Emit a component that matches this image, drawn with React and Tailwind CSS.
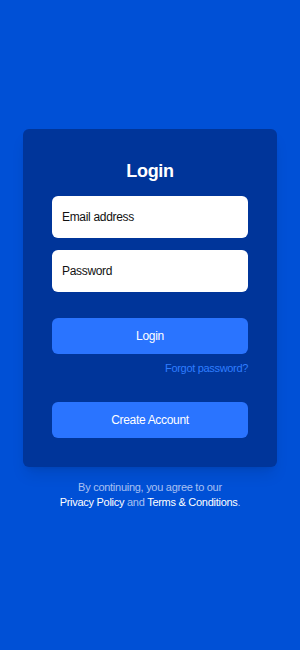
export default function App() {
  return (
    <div className="flex min-h-[650px] w-full flex-col items-center bg-[#0050d6] pt-[129px] font-['Liberation_Sans',Arial,sans-serif] tracking-[-0.02em]">
      <div className="w-[254px] rounded-md bg-[#00359a] px-[29px] pb-[29px] pt-[31px] shadow-lg">
        <h1 className="text-center text-[18px] font-bold leading-[22px] text-white">Login</h1>
        <div className="mt-[14px] flex h-[42px] items-center rounded-md bg-white px-[10px] text-[12px] text-[#111]">Email address</div>
        <div className="mt-[12px] flex h-[42px] items-center rounded-md bg-white px-[10px] text-[12px] text-[#111]">Password</div>
        <button type="button" className="mt-[26px] flex h-[36px] w-full items-center justify-center rounded-md bg-[#2a74ff] text-[12px] text-white">Login</button>
        <div className="mt-[6px] text-right text-[11px] text-[#2f7dff]">Forgot password?</div>
        <button type="button" className="mt-[25px] flex h-[36px] w-full items-center justify-center rounded-md bg-[#2a74ff] text-[12px] text-white">Create Account</button>
      </div>
      <p className="mt-[13px] text-center text-[11px] leading-[15px] tracking-tight text-[#a9c0f2]">
        By continuing, you agree to our
        <br />
        <span className="text-white">Privacy Policy</span> and <span className="text-white">Terms &amp; Conditions</span>.
      </p>
    </div>
  );
}
